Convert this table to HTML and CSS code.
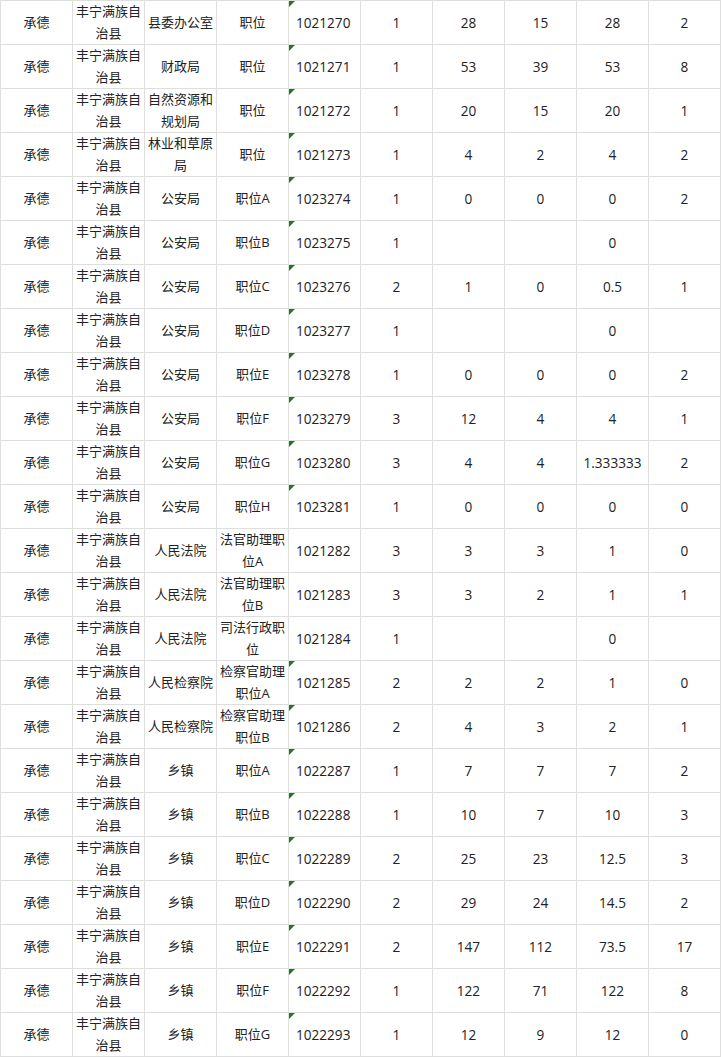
FILE: index.html
```html
<!DOCTYPE html>
<html lang="zh-CN">
<head>
<meta charset="utf-8">
<title>表格</title>
<link rel="stylesheet" href="styles.css">
</head>
<body>
<table class="sheet">
<colgroup><col><col><col><col><col><col><col><col><col><col></colgroup>
<tbody>
<tr><td>承德</td><td>丰宁满族自治县</td><td>县委办公室</td><td>职位</td><td class="code tri">1021270</td><td class="n">1</td><td class="n">28</td><td class="n">15</td><td class="n">28</td><td class="n">2</td></tr>
<tr><td>承德</td><td>丰宁满族自治县</td><td>财政局</td><td>职位</td><td class="code tri">1021271</td><td class="n">1</td><td class="n">53</td><td class="n">39</td><td class="n">53</td><td class="n">8</td></tr>
<tr><td>承德</td><td>丰宁满族自治县</td><td>自然资源和规划局</td><td>职位</td><td class="code tri">1021272</td><td class="n">1</td><td class="n">20</td><td class="n">15</td><td class="n">20</td><td class="n">1</td></tr>
<tr><td>承德</td><td>丰宁满族自治县</td><td>林业和草原局</td><td>职位</td><td class="code tri">1021273</td><td class="n">1</td><td class="n">4</td><td class="n">2</td><td class="n">4</td><td class="n">2</td></tr>
<tr><td>承德</td><td>丰宁满族自治县</td><td>公安局</td><td>职位A</td><td class="code tri">1023274</td><td class="n">1</td><td class="n">0</td><td class="n">0</td><td class="n">0</td><td class="n">2</td></tr>
<tr><td>承德</td><td>丰宁满族自治县</td><td>公安局</td><td>职位B</td><td class="code tri">1023275</td><td class="n">1</td><td class="n"></td><td class="n"></td><td class="n">0</td><td class="n"></td></tr>
<tr><td>承德</td><td>丰宁满族自治县</td><td>公安局</td><td>职位C</td><td class="code tri">1023276</td><td class="n">2</td><td class="n">1</td><td class="n">0</td><td class="n">0.5</td><td class="n">1</td></tr>
<tr><td>承德</td><td>丰宁满族自治县</td><td>公安局</td><td>职位D</td><td class="code tri">1023277</td><td class="n">1</td><td class="n"></td><td class="n"></td><td class="n">0</td><td class="n"></td></tr>
<tr><td>承德</td><td>丰宁满族自治县</td><td>公安局</td><td>职位E</td><td class="code tri">1023278</td><td class="n">1</td><td class="n">0</td><td class="n">0</td><td class="n">0</td><td class="n">2</td></tr>
<tr><td>承德</td><td>丰宁满族自治县</td><td>公安局</td><td>职位F</td><td class="code tri">1023279</td><td class="n">3</td><td class="n">12</td><td class="n">4</td><td class="n">4</td><td class="n">1</td></tr>
<tr><td>承德</td><td>丰宁满族自治县</td><td>公安局</td><td>职位G</td><td class="code tri">1023280</td><td class="n">3</td><td class="n">4</td><td class="n">4</td><td class="n">1.333333</td><td class="n">2</td></tr>
<tr><td>承德</td><td>丰宁满族自治县</td><td>公安局</td><td>职位H</td><td class="code tri">1023281</td><td class="n">1</td><td class="n">0</td><td class="n">0</td><td class="n">0</td><td class="n">0</td></tr>
<tr><td>承德</td><td>丰宁满族自治县</td><td>人民法院</td><td>法官助理职位A</td><td class="code">1021282</td><td class="n">3</td><td class="n">3</td><td class="n">3</td><td class="n">1</td><td class="n">0</td></tr>
<tr><td>承德</td><td>丰宁满族自治县</td><td>人民法院</td><td>法官助理职位B</td><td class="code">1021283</td><td class="n">3</td><td class="n">3</td><td class="n">2</td><td class="n">1</td><td class="n">1</td></tr>
<tr><td>承德</td><td>丰宁满族自治县</td><td>人民法院</td><td>司法行政职位</td><td class="code">1021284</td><td class="n">1</td><td class="n"></td><td class="n"></td><td class="n">0</td><td class="n"></td></tr>
<tr><td>承德</td><td>丰宁满族自治县</td><td>人民检察院</td><td>检察官助理职位A</td><td class="code tri">1021285</td><td class="n">2</td><td class="n">2</td><td class="n">2</td><td class="n">1</td><td class="n">0</td></tr>
<tr><td>承德</td><td>丰宁满族自治县</td><td>人民检察院</td><td>检察官助理职位B</td><td class="code tri">1021286</td><td class="n">2</td><td class="n">4</td><td class="n">3</td><td class="n">2</td><td class="n">1</td></tr>
<tr><td>承德</td><td>丰宁满族自治县</td><td>乡镇</td><td>职位A</td><td class="code tri">1022287</td><td class="n">1</td><td class="n">7</td><td class="n">7</td><td class="n">7</td><td class="n">2</td></tr>
<tr><td>承德</td><td>丰宁满族自治县</td><td>乡镇</td><td>职位B</td><td class="code tri">1022288</td><td class="n">1</td><td class="n">10</td><td class="n">7</td><td class="n">10</td><td class="n">3</td></tr>
<tr><td>承德</td><td>丰宁满族自治县</td><td>乡镇</td><td>职位C</td><td class="code tri">1022289</td><td class="n">2</td><td class="n">25</td><td class="n">23</td><td class="n">12.5</td><td class="n">3</td></tr>
<tr><td>承德</td><td>丰宁满族自治县</td><td>乡镇</td><td>职位D</td><td class="code tri">1022290</td><td class="n">2</td><td class="n">29</td><td class="n">24</td><td class="n">14.5</td><td class="n">2</td></tr>
<tr><td>承德</td><td>丰宁满族自治县</td><td>乡镇</td><td>职位E</td><td class="code tri">1022291</td><td class="n">2</td><td class="n">147</td><td class="n">112</td><td class="n">73.5</td><td class="n">17</td></tr>
<tr><td>承德</td><td>丰宁满族自治县</td><td>乡镇</td><td>职位F</td><td class="code tri">1022292</td><td class="n">1</td><td class="n">122</td><td class="n">71</td><td class="n">122</td><td class="n">8</td></tr>
<tr><td>承德</td><td>丰宁满族自治县</td><td>乡镇</td><td>职位G</td><td class="code tri">1022293</td><td class="n">1</td><td class="n">12</td><td class="n">9</td><td class="n">12</td><td class="n">0</td></tr>
</tbody>
</table>
</body>
</html>
```
FILE: styles.css
```css
html, body {
  margin: 0;
  padding: 0;
  background: #ffffff;
}

.sheet {
  table-layout: fixed;
  border-collapse: separate;
  border-spacing: 1px;
  background: #dedede;
  width: 721px;
  font-family: "Open Sans", "Noto Sans CJK SC", sans-serif;
  font-size: 13px;
  color: #222222;
}

.sheet col {
  width: 71px;
}

.sheet td {
  background: #ffffff;
  height: 43px;
  padding: 0 2px;
  box-sizing: border-box;
  text-align: center;
  vertical-align: middle;
  line-height: 21.5px;
  overflow: hidden;
  word-break: break-all;
}

.sheet td.n,
.sheet td.code {
  font-size: 13.6px;
}

.sheet td.code {
  text-align: left;
  padding-left: 7px;
  position: relative;
}

.sheet td.tri::before {
  content: "";
  position: absolute;
  left: 0;
  top: 0;
  width: 0;
  height: 0;
  border-top: 6px solid #1f7a1f;
  border-right: 6px solid transparent;
}
```
